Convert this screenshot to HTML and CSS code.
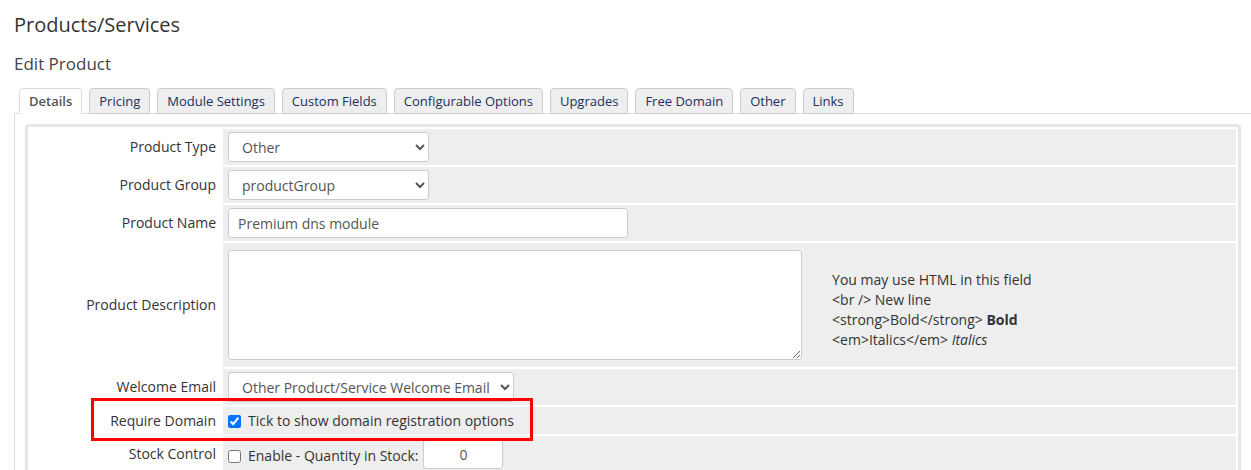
FILE: index.html
```html
<!DOCTYPE html>
<html lang="en">
<head>
<meta charset="utf-8">
<title>Products/Services</title>
<link rel="stylesheet" href="styles.css">
</head>
<body>
<main class="content">
  <h1 class="page-title">Products/Services</h1>
  <h2 class="section-title">Edit Product</h2>
  <nav class="tabs">
    <a class="tab tab-active" href="#details">Details</a>
    <a class="tab" href="#pricing">Pricing</a>
    <a class="tab" href="#module">Module Settings</a>
    <a class="tab" href="#fields">Custom Fields</a>
    <a class="tab" href="#options">Configurable Options</a>
    <a class="tab" href="#upgrades">Upgrades</a>
    <a class="tab" href="#domain">Free Domain</a>
    <a class="tab" href="#other">Other</a>
    <a class="tab" href="#links">Links</a>
  </nav>
  <form class="tab-content" id="details">
    <table class="form">
      <tbody>
        <tr>
          <td class="field-label"><label for="type">Product Type</label></td>
          <td class="field-area"><select class="control select" id="type"><option>Other</option></select></td>
        </tr>
        <tr>
          <td class="field-label"><label for="group">Product Group</label></td>
          <td class="field-area"><select class="control select" id="group"><option>productGroup</option></select></td>
        </tr>
        <tr>
          <td class="field-label"><label for="name">Product Name</label></td>
          <td class="field-area"><input class="control name-input" id="name" type="text" value="Premium dns module"></td>
        </tr>
        <tr>
          <td class="field-label"><label for="description">Product Description</label></td>
          <td class="field-area">
            <div class="description">
              <textarea class="control description-input" id="description"></textarea>
              <p class="help">You may use HTML in this field<br>&lt;br /&gt; New line<br>&lt;strong&gt;Bold&lt;/strong&gt; <strong>Bold</strong><br>&lt;em&gt;Italics&lt;/em&gt; <em>Italics</em></p>
            </div>
          </td>
        </tr>
        <tr>
          <td class="field-label"><label for="email">Welcome Email</label></td>
          <td class="field-area"><select class="control select select-auto" id="email"><option>Other Product/Service Welcome Email</option></select></td>
        </tr>
        <tr class="highlighted">
          <td class="field-label"><label for="require-domain">Require Domain</label></td>
          <td class="field-area"><label class="check"><input class="checkbox" id="require-domain" type="checkbox" checked>Tick to show domain registration options</label></td>
        </tr>
        <tr>
          <td class="field-label"><label for="stock-control">Stock Control</label></td>
          <td class="field-area">
            <div class="stock">
              <label class="check"><input class="checkbox" id="stock-control" type="checkbox">Enable - Quantity in Stock:</label>
              <input class="control quantity" type="text" value="0" aria-label="Quantity in Stock">
            </div>
          </td>
        </tr>
      </tbody>
    </table>
  </form>
</main>
</body>
</html>
```

FILE: styles.css
```css
*,
*::after {
  box-sizing: border-box;
}

html {
  height: 100%;
  overflow: hidden;
}

body {
  margin: 0;
  background: #fff;
  color: #333;
  font: 14px/20px "Open Sans", "Noto Sans", sans-serif;
}

.content {
  padding: 12px 0 0 14px;
}

.page-title {
  margin: 0 0 14px;
  font-size: 20px;
  font-weight: 400;
  line-height: 26px;
}

.section-title {
  margin: 0 0 12px;
  color: #444;
  font-size: 17px;
  font-weight: 400;
  line-height: 24px;
}

.tabs {
  display: flex;
  gap: 7px;
  padding-left: 5px;
  margin-bottom: -1px;
  position: relative;
}

.tab {
  padding: 3px 9px 2px;
  border: 1px solid #ccc;
  border-radius: 4px 4px 0 0;
  background: #eee;
  color: #202f60;
  font-size: 13px;
  line-height: 19px;
  text-decoration: none;
}

.tab-active {
  border-color: #ddd;
  border-bottom-color: #fff;
  background: #fff;
  color: #555;
  font-weight: 600;
}

.tab-content {
  padding: 10px;
  border: solid #ddd;
  border-width: 1px 0 0 1px;
}

.form {
  width: 100%;
  border: 3px solid #e2e7e9;
  border-radius: 4px;
  border-spacing: 2px;
}

.field-label {
  width: 191px;
  padding: 3px 5px;
  text-align: right;
}

.field-area {
  padding: 3px 5px;
  background: #eee;
}

.control {
  display: block;
  height: 30px;
  margin: 0;
  padding: 4px 9px;
  border: 1px solid #ccc;
  border-radius: 3px;
  background-color: #fff;
  color: #555;
  font: inherit;
}

.select {
  width: 201px;
}

.select-auto {
  width: auto;
  padding-right: 7px;
}

.name-input {
  width: 400px;
}

.description {
  display: grid;
  grid-template-columns: 59fr 41fr;
  gap: 30px;
  padding: 4px 0;
}

.description-input {
  width: 100%;
  height: 110px;
  resize: both;
}

.help {
  margin: 0;
  padding-top: 20px;
}

.highlighted {
  position: relative;
}

.highlighted .field-label::after {
  content: "";
  position: absolute;
  top: -9px;
  left: 61px;
  width: 442px;
  height: 43px;
  border: 3px solid #f00;
}

.check {
  display: flex;
  align-items: center;
  gap: 7px;
  padding-top: 1px;
}

.checkbox {
  width: 13px;
  height: 13px;
  margin: 0;
}

.stock {
  display: flex;
  align-items: center;
  gap: 5px;
}

.stock .check {
  padding-top: 4px;
}

.quantity {
  width: 80px;
  text-align: center;
}
```
